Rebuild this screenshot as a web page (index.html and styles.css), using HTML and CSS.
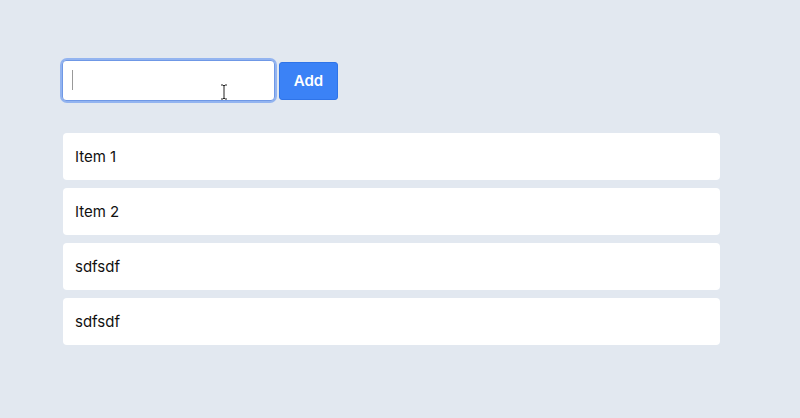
FILE: index.html
```html
<!DOCTYPE html>
<html lang="en">
<head>
    <meta charset="UTF-8">
    <meta name="viewport" content="width=device-width, initial-scale=1.0">
    <title>List</title>
    <link rel="stylesheet" href="styles.css">
</head>
<body>
    <div class="container">
        <form class="add-form">
            <div class="field">
                <input type="text" class="add-input" aria-label="New item">
                <span class="caret"></span>
                <svg class="ibeam" width="8" height="16" viewBox="0 0 8 16">
                    <path d="M1 1h2l1 1 1-1h2M4 2v12M1 15h2l1-1 1 1h2" fill="none" stroke="#222" stroke-width="1"/>
                </svg>
            </div>
            <button type="submit" class="add-button">Add</button>
        </form>
        <ul class="item-list">
            <li class="item">Item 1</li>
            <li class="item">Item 2</li>
            <li class="item">sdfsdf</li>
            <li class="item">sdfsdf</li>
        </ul>
    </div>
</body>
</html>
```

FILE: styles.css
```css
body {
    font-family: Inter, "Noto Sans", Arial, sans-serif;
    background-color: #e2e8f0;
    color: #111;
    margin: 0;
}

.container {
    padding: 60px 80px 0 63px;
    width: 657px;
}

.add-form {
    display: flex;
    align-items: center;
    gap: 4px;
    margin: 0 0 32px -1px;
}

.field {
    position: relative;
    border-radius: 5px;
    box-shadow: 0 0 0 2px #93b4f0;
}

.add-input {
    display: block;
    width: 213px;
    height: 41px;
    padding: 0 10px;
    border: 1px solid #6f98e6;
    border-radius: 4px;
    box-sizing: border-box;
    background: #fff;
    outline: none;
}

.caret {
    position: absolute;
    left: 10px;
    top: 10px;
    width: 1px;
    height: 20px;
    background: #999;
}

.ibeam {
    position: absolute;
    left: 158px;
    top: 24px;
}

.add-button {
    width: 59px;
    height: 38px;
    background-color: #3b82f6;
    color: #fff;
    border: 1px solid #2f74e8;
    border-radius: 3px;
    font-family: inherit;
    font-size: 15px;
    font-weight: 600;
    cursor: pointer;
}

.item-list {
    list-style: none;
    margin: 0;
    padding: 0;
    display: flex;
    flex-direction: column;
    gap: 8px;
}

.item {
    background: #fff;
    border-radius: 4px;
    height: 47px;
    display: flex;
    align-items: center;
    padding: 0 12px;
    font-size: 15px;
}
```
